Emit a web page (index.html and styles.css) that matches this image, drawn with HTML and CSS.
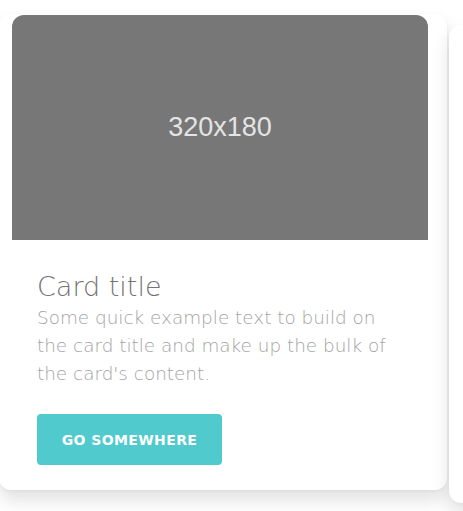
FILE: index.html
```html
<!DOCTYPE html>
<html>
<head>
<meta charset="utf-8">
<link rel="stylesheet" href="styles.css">
</head>
<body>
<div class="track">
  <div class="card">
    <div class="card-img"><span>320x180</span></div>
    <div class="card-body">
      <h5 class="card-title">Card title</h5>
      <p class="card-text">Some quick example text to build on the card title and make up the bulk of the card's content.</p>
      <a class="btn" href="#">GO SOMEWHERE</a>
    </div>
  </div>
  <div class="card card-next"></div>
</div>
</body>
</html>
```
FILE: styles.css
```css
html, body {
  margin: 0;
  padding: 0;
  background: #fff;
  overflow: hidden;
  width: 463px;
  height: 511px;
}
.track {
  display: flex;
  align-items: flex-start;
  gap: 2px;
  padding-top: 14px;
  margin-left: -1px;
}
.card {
  flex: none;
  width: 448px;
  box-sizing: border-box;
  background: #fff;
  border-radius: 12px;
  box-shadow: 0 10px 18px rgba(0, 0, 0, 0.12), 0 1px 3px rgba(0, 0, 0, 0.04);
  padding: 1px 19px 25px 13px;
}
.card-img {
  height: 225px;
  background: #777;
  border-radius: 12px 12px 0 0;
  display: flex;
  align-items: center;
  justify-content: center;
}
.card-img span {
  font-family: "Liberation Sans", Arial, sans-serif;
  font-size: 27px;
  color: #e4e4e4;
}
.card-body {
  padding: 0 25px;
}
.card-title {
  margin: 30px 0 0;
  font-family: "DejaVu Sans", sans-serif;
  font-weight: 200;
  font-size: 27px;
  line-height: 34px;
  color: #737373;
}
.card-text {
  margin: 0;
  font-family: "DejaVu Sans", sans-serif;
  font-weight: 200;
  font-size: 18.4px;
  line-height: 28px;
  color: #a3a3a3;
}
.btn {
  display: inline-flex;
  align-items: center;
  justify-content: center;
  margin-top: 26px;
  width: 185px;
  height: 51px;
  background: #50cacd;
  border-radius: 4px;
  color: #fff;
  text-decoration: none;
  font-family: "DejaVu Sans", sans-serif;
  font-weight: 700;
  font-size: 14px;
  letter-spacing: 0.4px;
}
.card-next {
  width: 120px;
  height: 478px;
  margin-top: 11px;
}
```
